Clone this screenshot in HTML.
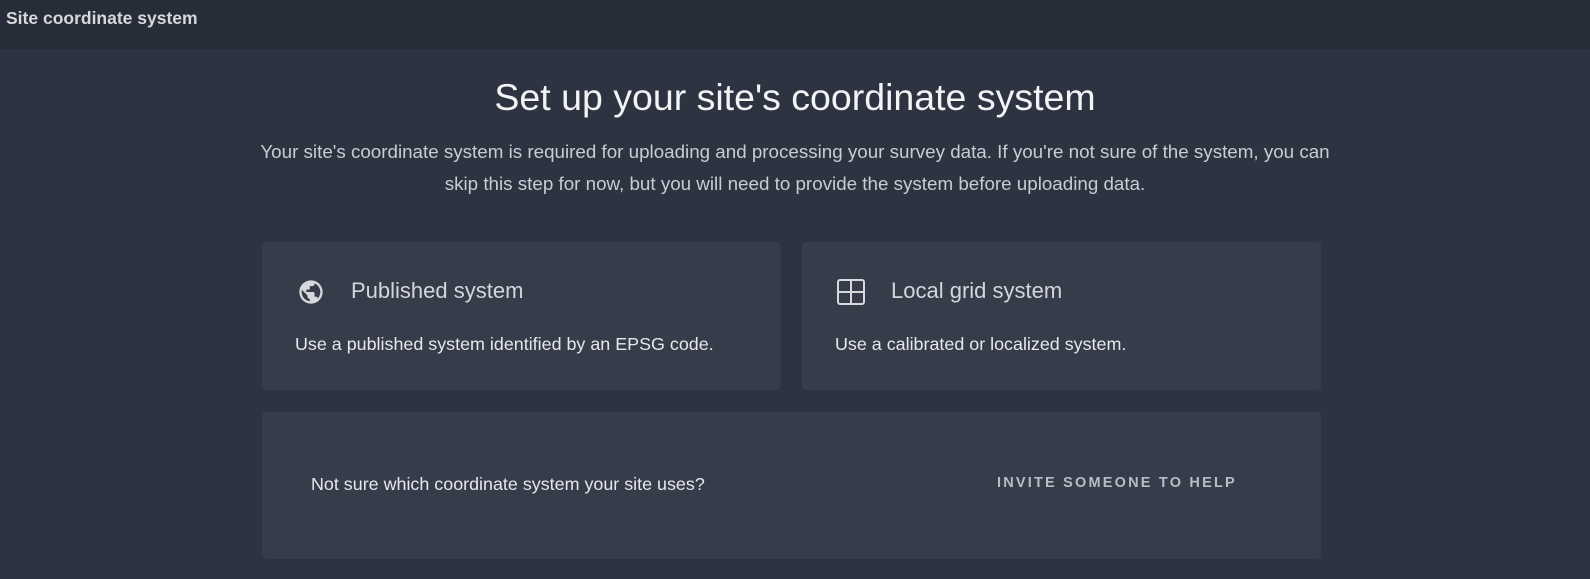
<!DOCTYPE html>
<html><head><style>
*{margin:0;padding:0;box-sizing:border-box}
body{width:1590px;height:579px;background:#2d3340;font-family:"Liberation Sans",sans-serif;color:#e4e6ea;position:relative;overflow:hidden}
.hdr{position:absolute;left:0;top:0;width:1590px;height:49px;background:#272d38;}
.hdr span{position:absolute;left:6px;top:8px;font-size:17.5px;font-weight:bold;color:#d6d8dc}
h1{position:absolute;left:0;width:1590px;text-align:center;top:76px;font-size:37.5px;font-weight:normal;color:#f2f3f5}
p.d{position:absolute;left:145px;width:1300px;text-align:center;top:136px;font-size:18.8px;line-height:32px;color:#c9ccd2;white-space:nowrap}
.card{position:absolute;background:#363c49;border-radius:4px}
.t{position:absolute;font-size:22px;color:#d3d6db}
.s{position:absolute;font-size:17.9px;color:#e6e8eb}
</style></head><body>
<div class="hdr"><span>Site coordinate system</span></div>
<h1>Set up your site's coordinate system</h1>
<p class="d">Your site's coordinate system is required for uploading and processing your survey data. If you're not sure of the system, you can<br>skip this step for now, but you will need to provide the system before uploading data.</p>
<div class="card" style="left:262px;top:242px;width:519px;height:148px">
<svg style="position:absolute;left:35px;top:36px" width="28" height="28" viewBox="0 0 24 24"><path fill="#d6d8dc" d="M12 2C6.48 2 2 6.48 2 12s4.48 10 10 10 10-4.48 10-10S17.52 2 12 2zm-1 17.93c-3.95-.49-7-3.85-7-7.93 0-.62.08-1.21.21-1.79L9 15v1c0 1.1.9 2 2 2v1.93zm6.9-2.54c-.26-.81-1-1.39-1.9-1.39h-1v-3c0-.55-.45-1-1-1H8v-2h2c.55 0 1-.45 1-1V7h2c1.1 0 2-.9 2-2v-.41c2.93 1.19 5 4.06 5 7.41 0 2.08-.8 3.97-2.1 5.39z"/></svg>
<div class="t" style="left:89px;top:36px">Published system</div>
<div class="s" style="left:33px;top:92px">Use a published system identified by an EPSG code.</div>
</div>
<div class="card" style="left:802px;top:242px;width:519px;height:148px">
<svg style="position:absolute;left:35px;top:37px" width="28" height="26" viewBox="0 0 28 26"><rect x="1" y="1" width="26" height="24" rx="2" fill="none" stroke="#d6d8dc" stroke-width="2"/><path d="M14 1v24M1 13h26" stroke="#d6d8dc" stroke-width="2"/></svg>
<div class="t" style="left:89px;top:36px">Local grid system</div>
<div class="s" style="left:33px;top:92px">Use a calibrated or localized system.</div>
</div>
<div class="card" style="left:262px;top:412px;width:1059px;height:147px">
<div class="s" style="left:49px;top:62px">Not sure which coordinate system your site uses?</div>
<div style="position:absolute;left:735px;top:63px;font-size:14.5px;font-weight:bold;letter-spacing:2.2px;color:#b8bcc4">INVITE SOMEONE TO HELP</div>
</div>
</body></html>
